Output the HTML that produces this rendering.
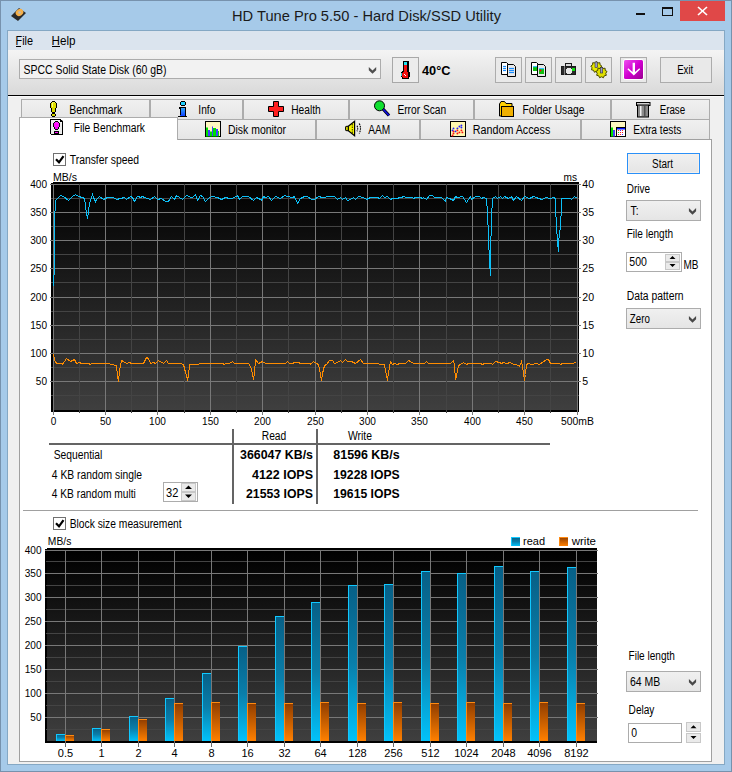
<!DOCTYPE html><html><head><meta charset="utf-8"><style>html,body{margin:0;padding:0;width:732px;height:772px;overflow:hidden;background:#a9cbea}svg{display:block}text{font-family:"Liberation Sans", sans-serif}</style></head><body>
<svg width="732" height="772" viewBox="0 0 732 772" shape-rendering="crispEdges">
<defs>
<linearGradient id="tb" x1="0" y1="0" x2="0" y2="1"><stop offset="0" stop-color="#f4f4f4"/><stop offset="1" stop-color="#d9d9d9"/></linearGradient>
<linearGradient id="tab" x1="0" y1="0" x2="0" y2="1"><stop offset="0" stop-color="#f0f0f0"/><stop offset="1" stop-color="#e5e5e5"/></linearGradient>
<linearGradient id="btn" x1="0" y1="0" x2="0" y2="1"><stop offset="0" stop-color="#f0f0f0"/><stop offset="1" stop-color="#e5e5e5"/></linearGradient>
<linearGradient id="ch" x1="0" y1="0" x2="0" y2="1"><stop offset="0" stop-color="#000000"/><stop offset="1" stop-color="#3f3f3f"/></linearGradient>
<linearGradient id="rb" x1="0" y1="0" x2="0" y2="1"><stop offset="0" stop-color="#075f86"/><stop offset="0.5" stop-color="#0a7eaa"/><stop offset="1" stop-color="#02c2fa"/></linearGradient>
<linearGradient id="wb" x1="0" y1="0" x2="0" y2="1"><stop offset="0" stop-color="#8e3c00"/><stop offset="1" stop-color="#ff8000"/></linearGradient>
</defs>
<rect x="0" y="0" width="732" height="772" fill="#7792ad"/>
<rect x="1" y="1" width="730" height="770" fill="#a6cae9"/>
<rect x="7" y="30" width="718" height="735" fill="#85a8c4"/>
<rect x="8" y="31" width="716" height="733" fill="#f0f0f0"/>
<text x="232" y="21" font-size="15" text-anchor="start" font-weight="normal" fill="#1a1a1a" textLength="269" lengthAdjust="spacingAndGlyphs">HD Tune Pro 5.50 - Hard Disk/SSD Utility</text>
<g shape-rendering="geometricPrecision"><path d="M11 16 L19 8 L26 13 L18 21 Z" fill="#2a2a2a"/><ellipse cx="19.5" cy="12.5" rx="4" ry="3.3" fill="#f5b04a" transform="rotate(-35 19.5 12.5)"/><circle cx="19.5" cy="12.5" r="1.2" fill="#bbb"/></g>
<rect x="636" y="13" width="9" height="2" fill="#111"/>
<rect x="662" y="7" width="11" height="9" fill="#111"/>
<rect x="663" y="8" width="9" height="7" fill="#a6cae9"/>
<rect x="663" y="8" width="9" height="1" fill="#111"/>
<rect x="680" y="1" width="45" height="20" fill="#e04848"/>
<g shape-rendering="geometricPrecision" stroke="#fff" stroke-width="1.6"><line x1="698" y1="7" x2="707" y2="15"/><line x1="707" y1="7" x2="698" y2="15"/></g>
<rect x="8" y="31" width="716" height="19" fill="#dbe4ee"/>
<text x="15.5" y="44.5" font-size="12" text-anchor="start" font-weight="normal" fill="#000" textLength="17.5" lengthAdjust="spacingAndGlyphs">File</text>
<rect x="16" y="46" width="5" height="1" fill="#000"/>
<text x="51.5" y="44.5" font-size="12" text-anchor="start" font-weight="normal" fill="#000" textLength="24" lengthAdjust="spacingAndGlyphs">Help</text>
<rect x="52" y="46" width="8" height="1" fill="#000"/>
<rect x="8" y="50" width="716" height="45" fill="url(#tb)"/>
<rect x="8" y="95" width="716" height="1" fill="#000"/>
<rect x="8" y="96" width="716" height="1" fill="#fafafa"/>
<rect x="19" y="59" width="362" height="20" fill="#acacac"/>
<rect x="20" y="60" width="360" height="18" fill="#f2f2f2"/>
<text x="23.5" y="74" font-size="12" text-anchor="start" font-weight="normal" fill="#000" textLength="143" lengthAdjust="spacingAndGlyphs">SPCC Solid State Disk (60 gB)</text>
<path d="M368.8 67 L372.5 70.6 L376.2 67 L376.2 70.2 L372.5 73.8 L368.8 70.2 Z" fill="#505050" shape-rendering="geometricPrecision"/>
<rect x="392" y="57" width="27" height="26" fill="#a8a8a8"/>
<rect x="393" y="58" width="25" height="24" fill="#ececec"/>
<rect x="403" y="61" width="6" height="11" fill="#000"/>
<rect x="404" y="62" width="3" height="3" fill="#20e0f0"/>
<rect x="404" y="65" width="3" height="7" fill="#f01010"/>
<rect x="407" y="62" width="2" height="10" fill="#000"/>
<rect x="402" y="71" width="7" height="7" fill="#000"/>
<rect x="401" y="72" width="9" height="5" fill="#000"/>
<rect x="402" y="72" width="6" height="5" fill="#f01010"/>
<rect x="403" y="77" width="5" height="1" fill="#f01010"/>
<rect x="401" y="73" width="1" height="3" fill="#20d0e0"/>
<rect x="404" y="74" width="1" height="1" fill="#fff"/>
<rect x="405" y="75" width="1" height="1" fill="#fff"/>
<rect x="402" y="78" width="7" height="1" fill="#000"/>
<rect x="404" y="71" width="3" height="2" fill="#f01010"/>
<rect x="402" y="72" width="1" height="1" fill="#000"/>
<rect x="408" y="72" width="1" height="1" fill="#000"/>
<text x="422" y="75" font-size="12" text-anchor="start" font-weight="bold" fill="#000" textLength="28.5" lengthAdjust="spacingAndGlyphs">40°C</text>
<rect x="495" y="57" width="27" height="26" fill="#acacac"/>
<rect x="496" y="58" width="25" height="24" fill="#e9e9e9"/>
<rect x="525" y="57" width="27" height="26" fill="#acacac"/>
<rect x="526" y="58" width="25" height="24" fill="#e9e9e9"/>
<rect x="555" y="57" width="27" height="26" fill="#acacac"/>
<rect x="556" y="58" width="25" height="24" fill="#e9e9e9"/>
<rect x="585" y="57" width="27" height="26" fill="#acacac"/>
<rect x="586" y="58" width="25" height="24" fill="#e9e9e9"/>
<rect x="620" y="57" width="27" height="26" fill="#acacac"/>
<rect x="621" y="58" width="25" height="24" fill="#e9e9e9"/>
<rect x="660" y="57" width="52" height="26" fill="#acacac"/>
<rect x="661" y="58" width="50" height="24" fill="#e9e9e9"/>
<text x="677.2" y="74" font-size="12" text-anchor="start" font-weight="normal" fill="#000" textLength="16" lengthAdjust="spacingAndGlyphs">Exit</text>
<g shape-rendering="geometricPrecision">
<path d="M501.5 62.5 h5 l1.5 1.5 v10.5 h-6.5 z" fill="#fff" stroke="#000" stroke-width="1"/>
<path d="M507.5 64.5 h6 l2 2 v10 h-8 z" fill="#e8e8e8" stroke="#000" stroke-width="1"/>
<path d="M531.5 62.5 h5 l1.5 1.5 v10.5 h-6.5 z" fill="#fff" stroke="#000" stroke-width="1"/>
<path d="M537.5 64.5 h6 l2 2 v10 h-8 z" fill="#e8e8e8" stroke="#000" stroke-width="1"/>
<g stroke="#1a8cff" stroke-width="1.2"><line x1="503" y1="66.5" x2="506" y2="66.5"/><line x1="503" y1="68.5" x2="506" y2="68.5"/><line x1="503" y1="70.5" x2="506" y2="70.5"/><line x1="509" y1="68.5" x2="514" y2="68.5"/><line x1="509" y1="70.5" x2="514" y2="70.5"/><line x1="509" y1="72.5" x2="514" y2="72.5"/></g>
<rect x="533" y="66" width="4" height="5" fill="#10c010"/><rect x="533" y="66" width="4" height="1.2" fill="#30c0ff"/><rect x="539" y="68" width="5" height="6" fill="#10c010"/><rect x="539" y="68" width="5" height="1.2" fill="#30c0ff"/><circle cx="540.5" cy="70.5" r="0.9" fill="#f00"/>
</g>
<rect x="565" y="63" width="7" height="3" fill="#1a1a1a"/>
<rect x="566" y="64" width="5" height="2" fill="#d8d8d8"/>
<rect x="561" y="66" width="15" height="9" fill="#1a1a1a"/>
<rect x="562" y="67" width="13" height="7" fill="#2a2a2a"/>
<rect x="564" y="66" width="1" height="9" fill="#808080"/>
<rect x="567" y="68" width="4" height="6" fill="#e8e8e8"/>
<rect x="566" y="69" width="6" height="4" fill="#e8e8e8"/>
<rect x="572" y="68" width="3" height="3" fill="#10e010"/>
<g shape-rendering="geometricPrecision">
<polygon points="596.30,61.40 597.77,62.96 599.90,62.71 600.03,64.85 601.82,66.03 600.53,67.75 601.15,69.80 599.06,70.30 598.21,72.26 596.30,71.30 594.38,72.26 593.53,70.29 591.45,69.80 592.06,67.74 590.79,66.02 592.58,64.85 592.70,62.71 594.83,62.96" fill="#e8e800" stroke="#4a4a00" stroke-width="1"/>
<polygon points="601.50,66.90 602.97,68.46 605.10,68.21 605.23,70.35 607.02,71.53 605.73,73.25 606.35,75.30 604.26,75.80 603.41,77.76 601.50,76.80 599.58,77.76 598.73,75.79 596.65,75.30 597.26,73.24 595.99,71.52 597.78,70.35 597.90,68.21 600.03,68.46" fill="#e0e000" stroke="#4a4a00" stroke-width="1"/>
<rect x="595" y="62" width="2.4" height="5.5" fill="#9a9ac8" stroke="#333" stroke-width="0.6"/><rect x="600.3" y="67.5" width="2.4" height="5.5" fill="#9a9ac8" stroke="#333" stroke-width="0.6"/>
<defs><linearGradient id="mg" x1="0" y1="0" x2="1" y2="1"><stop offset="0" stop-color="#f050f0"/><stop offset="0.5" stop-color="#d000d0"/><stop offset="1" stop-color="#9a0090"/></linearGradient></defs>
<rect x="623.5" y="59.5" width="20" height="20" rx="2" fill="none" stroke="#fff" stroke-width="1"/><rect x="624" y="60" width="19" height="19" rx="1.5" fill="url(#mg)"/><path d="M632.6 62.8 h2.4 v9.2 l4.3 -3.8 l0.9 1 l-6.4 6.4 l-6.4 -6.4 l0.9 -1 l4.3 3.8 z" fill="#fff"/>
</g>
<rect x="21" y="99" width="129" height="21" fill="#acacac"/>
<rect x="22" y="100" width="127" height="20" fill="url(#tab)"/>
<text x="69.3" y="113.7" font-size="12" text-anchor="start" font-weight="normal" fill="#000" textLength="53" lengthAdjust="spacingAndGlyphs">Benchmark</text>
<rect x="150" y="99" width="93" height="21" fill="#acacac"/>
<rect x="151" y="100" width="91" height="20" fill="url(#tab)"/>
<text x="198.3" y="113.7" font-size="12" text-anchor="start" font-weight="normal" fill="#000" textLength="17" lengthAdjust="spacingAndGlyphs">Info</text>
<rect x="243" y="99" width="106" height="21" fill="#acacac"/>
<rect x="244" y="100" width="104" height="20" fill="url(#tab)"/>
<text x="291.2" y="113.7" font-size="12" text-anchor="start" font-weight="normal" fill="#000" textLength="29.5" lengthAdjust="spacingAndGlyphs">Health</text>
<rect x="349" y="99" width="125" height="21" fill="#acacac"/>
<rect x="350" y="100" width="123" height="20" fill="url(#tab)"/>
<text x="397.4" y="113.7" font-size="12" text-anchor="start" font-weight="normal" fill="#000" textLength="48.8" lengthAdjust="spacingAndGlyphs">Error Scan</text>
<rect x="474" y="99" width="137" height="21" fill="#acacac"/>
<rect x="475" y="100" width="135" height="20" fill="url(#tab)"/>
<text x="522.5" y="113.7" font-size="12" text-anchor="start" font-weight="normal" fill="#000" textLength="62" lengthAdjust="spacingAndGlyphs">Folder Usage</text>
<rect x="611" y="99" width="99" height="21" fill="#acacac"/>
<rect x="612" y="100" width="97" height="20" fill="url(#tab)"/>
<text x="659.7" y="113.7" font-size="12" text-anchor="start" font-weight="normal" fill="#000" textLength="25.5" lengthAdjust="spacingAndGlyphs">Erase</text>
<rect x="177" y="119" width="139" height="21" fill="#acacac"/>
<rect x="178" y="120" width="137" height="20" fill="url(#tab)"/>
<text x="228" y="133.5" font-size="12" text-anchor="start" font-weight="normal" fill="#000" textLength="58" lengthAdjust="spacingAndGlyphs">Disk monitor</text>
<rect x="316" y="119" width="104" height="21" fill="#acacac"/>
<rect x="317" y="120" width="102" height="20" fill="url(#tab)"/>
<text x="368.3" y="133.5" font-size="12" text-anchor="start" font-weight="normal" fill="#000" textLength="22" lengthAdjust="spacingAndGlyphs">AAM</text>
<rect x="420" y="119" width="161" height="21" fill="#acacac"/>
<rect x="421" y="120" width="159" height="20" fill="url(#tab)"/>
<text x="472.8" y="133.5" font-size="12" text-anchor="start" font-weight="normal" fill="#000" textLength="77.5" lengthAdjust="spacingAndGlyphs">Random Access</text>
<rect x="581" y="119" width="129" height="21" fill="#acacac"/>
<rect x="582" y="120" width="127" height="20" fill="url(#tab)"/>
<text x="633.3" y="133.5" font-size="12" text-anchor="start" font-weight="normal" fill="#000" textLength="48" lengthAdjust="spacingAndGlyphs">Extra tests</text>
<rect x="19" y="139" width="693" height="623" fill="#a0a0a0"/>
<rect x="20" y="140" width="691" height="621" fill="#ffffff"/>
<rect x="19" y="117" width="159" height="23" fill="#acacac"/>
<rect x="20" y="118" width="157" height="22" fill="#ffffff"/>
<text x="73.7" y="132" font-size="12" text-anchor="start" font-weight="normal" fill="#000" textLength="71.3" lengthAdjust="spacingAndGlyphs">File Benchmark</text>
<g shape-rendering="geometricPrecision">
</g>
<rect x="52" y="101" width="3" height="1" fill="#000"/>
<rect x="51" y="102" width="5" height="1" fill="#000"/>
<rect x="50" y="103" width="7" height="5" fill="#000"/>
<rect x="51" y="108" width="5" height="4" fill="#000"/>
<rect x="52" y="112" width="3" height="1" fill="#000"/>
<rect x="52" y="102" width="3" height="1" fill="#f0f040"/>
<rect x="51" y="103" width="5" height="5" fill="#e0e000"/>
<rect x="52" y="108" width="3" height="4" fill="#d8d800"/>
<rect x="52" y="103" width="1" height="4" fill="#f8f880"/>
<rect x="52" y="113" width="3" height="1" fill="#000"/>
<rect x="51" y="114" width="5" height="2" fill="#000"/>
<rect x="52" y="116" width="3" height="1" fill="#000"/>
<rect x="52" y="114" width="3" height="2" fill="#d0d000"/>
<rect x="51" y="120" width="12" height="15" fill="#b0b0b0"/>
<rect x="50" y="119" width="11" height="15" fill="#000"/>
<rect x="60" y="120" width="2" height="1" fill="#000"/>
<rect x="61" y="121" width="1" height="1" fill="#000"/>
<rect x="62" y="121" width="1" height="13" fill="#000"/>
<rect x="51" y="134" width="12" height="1" fill="#000"/>
<rect x="51" y="120" width="9" height="14" fill="#ececec"/>
<rect x="60" y="121" width="1" height="13" fill="#ececec"/>
<rect x="61" y="122" width="1" height="12" fill="#ececec"/>
<rect x="60" y="121" width="1" height="1" fill="#000"/>
<rect x="61" y="122" width="1" height="1" fill="#fff"/>
<rect x="55" y="121" width="3" height="1" fill="#000"/>
<rect x="54" y="122" width="5" height="1" fill="#000"/>
<rect x="53" y="123" width="7" height="4" fill="#000"/>
<rect x="54" y="127" width="5" height="2" fill="#000"/>
<rect x="55" y="129" width="3" height="1" fill="#000"/>
<rect x="55" y="122" width="3" height="1" fill="#ff30ff"/>
<rect x="54" y="123" width="5" height="4" fill="#ff10ff"/>
<rect x="55" y="127" width="3" height="2" fill="#f000f0"/>
<rect x="54" y="131" width="5" height="3" fill="#000"/>
<rect x="55" y="132" width="3" height="1" fill="#ff10ff"/>
<g shape-rendering="geometricPrecision">
</g>
<rect x="181" y="101" width="4" height="1" fill="#000"/>
<rect x="180" y="102" width="6" height="3" fill="#000"/>
<rect x="181" y="105" width="4" height="1" fill="#000"/>
<rect x="181" y="102" width="4" height="3" fill="#20d0ff"/>
<rect x="179" y="107" width="7" height="1" fill="#000"/>
<rect x="179" y="108" width="2" height="1" fill="#000"/>
<rect x="180" y="109" width="1" height="7" fill="#000"/>
<rect x="185" y="108" width="1" height="8" fill="#000"/>
<rect x="178" y="116" width="9" height="1" fill="#000"/>
<defs><linearGradient id="ib" x1="0" y1="0" x2="0" y2="1"><stop offset="0" stop-color="#30a8ff"/><stop offset="1" stop-color="#1040ff"/></linearGradient></defs>
<rect x="181" y="108" width="4" height="8" fill="url(#ib)"/>
<rect x="180" y="115" width="1" height="1" fill="#1050ff"/>
<g shape-rendering="geometricPrecision">
<path d="M273.5 101.5 h5 v5 h5 v5 h-5 v5 h-5 v-5 h-5 v-5 h5 z" fill="#ff2020" stroke="#000" stroke-width="1"/>
<line x1="383" y1="109" x2="389" y2="115.5" stroke="#000" stroke-width="3.2"/><line x1="383" y1="109" x2="389" y2="115.5" stroke="#1010e0" stroke-width="1.8"/><circle cx="379.5" cy="105.8" r="5" fill="#10e030" stroke="#000" stroke-width="1"/>
<path d="M499.5 104 l1.5 -2.5 h3.5 l1.5 2 h6 v12.5 h-12.5 z" fill="#ffd000" stroke="#000" stroke-width="1"/><rect x="501.5" y="106.5" width="12" height="10" fill="#f0b000" stroke="#000" stroke-width="1"/>
<rect x="636.5" y="102.5" width="13.5" height="3" fill="#d0d0d0" stroke="#000" stroke-width="1"/><rect x="637.5" y="105" width="11" height="12" fill="#8a8a8a" stroke="#000" stroke-width="1"/><rect x="640" y="106" width="1.5" height="10" fill="#f0f0f0"/><rect x="644" y="106" width="1.5" height="10" fill="#505050"/>
<rect x="205.5" y="121.5" width="15" height="15" fill="#fff8c0" stroke="#000" stroke-width="1"/><path d="M206 127.5 h2 v3 h2 v1 h2 v-4.5 h1 v1 h3 v2 h1 v1 h2 v5.5 h-13 z" fill="#00e000"/><rect x="208" y="130" width="2" height="6" fill="#4040ff"/><rect x="212" y="126.5" width="1" height="9.5" fill="#4040ff"/><rect x="216" y="129" width="2" height="7" fill="#4040ff"/>
<rect x="345.6" y="126.2" width="3" height="4.6" rx="1.2" fill="#f0f000" stroke="#000" stroke-width="1.1"/><path d="M348.3 126.2 L354.6 121.2 L354.6 135.8 L348.3 130.8 Z" fill="#f4f400" stroke="#000" stroke-width="1.2"/><line x1="352.3" y1="124" x2="352.3" y2="133.5" stroke="#000" stroke-width="0.8" stroke-dasharray="1.5 1"/><path d="M357 125.8 q1.4 2.7 0 5.4 M359.2 123.6 q2.6 4.9 0 9.8" fill="none" stroke="#000" stroke-width="1.1" stroke-dasharray="1.6 0.8"/>
<rect x="450.5" y="121.5" width="15" height="15" fill="#fff8b0" stroke="#000" stroke-width="1"/>
<circle cx="453.5" cy="128.4" r="0.95" fill="#2020ff"/>
<circle cx="452.5" cy="130.4" r="0.95" fill="#2020ff"/>
<circle cx="455.5" cy="131.4" r="0.95" fill="#2020ff"/>
<circle cx="457.4" cy="128.4" r="0.95" fill="#2020ff"/>
<circle cx="459.4" cy="126.5" r="0.95" fill="#2020ff"/>
<circle cx="461.4" cy="125.4" r="0.95" fill="#2020ff"/>
<circle cx="461.4" cy="127.5" r="0.95" fill="#2020ff"/>
<circle cx="453.5" cy="131.4" r="0.95" fill="#ff1010"/>
<circle cx="453.5" cy="133.5" r="0.95" fill="#ff1010"/>
<circle cx="457.4" cy="130.4" r="0.95" fill="#ff1010"/>
<circle cx="457.4" cy="133.5" r="0.95" fill="#ff1010"/>
<circle cx="459.4" cy="132.4" r="0.95" fill="#ff1010"/>
<circle cx="461.4" cy="130.4" r="0.95" fill="#ff1010"/>
<circle cx="462.4" cy="132.4" r="0.95" fill="#ff1010"/>
<circle cx="452.5" cy="135.5" r="0.95" fill="#ff1010"/>
<rect x="610.5" y="121.5" width="15" height="15" fill="#fff8c0" stroke="#000" stroke-width="1"/><rect x="611" y="127.5" width="2" height="9" fill="#00e000"/><rect x="613" y="130" width="2" height="6.5" fill="#4040ff"/><rect x="616.5" y="127.5" width="9" height="9" fill="#fff" stroke="#000" stroke-width="1"/><rect x="617" y="128" width="8" height="1.5" fill="#0010ff"/>
<circle cx="618.5" cy="130.5" r="0.6" fill="#f00"/>
<circle cx="620.5" cy="130.5" r="0.6" fill="#20f"/>
<circle cx="622.5" cy="130.5" r="0.6" fill="#f00"/>
<circle cx="618.5" cy="132.5" r="0.6" fill="#0c0"/>
<circle cx="620.5" cy="132.5" r="0.6" fill="#f00"/>
<circle cx="622.5" cy="132.5" r="0.6" fill="#f00"/>
<circle cx="618.5" cy="134.5" r="0.6" fill="#f00"/>
<circle cx="620.5" cy="134.5" r="0.6" fill="#f00"/>
<circle cx="622.5" cy="134.5" r="0.6" fill="#20f"/>
</g>
<rect x="53" y="153" width="13" height="13" fill="#707070"/>
<rect x="54" y="154" width="11" height="11" fill="#ffffff"/>
<path d="M56 159.3 l3 3 l4.5 -6.2" fill="none" stroke="#000" stroke-width="2.2" shape-rendering="geometricPrecision"/>
<text x="69.8" y="163.7" font-size="12" text-anchor="start" font-weight="normal" fill="#000" textLength="69.2" lengthAdjust="spacingAndGlyphs">Transfer speed</text>
<rect x="51" y="182" width="528" height="230" fill="#000"/>
<rect x="53" y="184" width="524" height="226" fill="url(#ch)"/>
<rect x="51" y="410" width="528" height="2" fill="#000"/>
<rect x="51" y="182" width="2" height="1" fill="#ffffff"/>
<rect x="50" y="184" width="531" height="1" fill="#787878"/><rect x="51" y="198" width="528" height="1" fill="#444444"/><rect x="50" y="212" width="531" height="1" fill="#787878"/><rect x="51" y="226" width="528" height="1" fill="#444444"/><rect x="50" y="240" width="531" height="1" fill="#787878"/><rect x="51" y="254" width="528" height="1" fill="#444444"/><rect x="50" y="268" width="531" height="1" fill="#787878"/><rect x="51" y="282" width="528" height="1" fill="#444444"/><rect x="50" y="297" width="531" height="1" fill="#787878"/><rect x="51" y="311" width="528" height="1" fill="#444444"/><rect x="50" y="325" width="531" height="1" fill="#787878"/><rect x="51" y="339" width="528" height="1" fill="#444444"/><rect x="50" y="353" width="531" height="1" fill="#787878"/><rect x="51" y="367" width="528" height="1" fill="#444444"/><rect x="50" y="381" width="531" height="1" fill="#787878"/><rect x="51" y="395" width="528" height="1" fill="#444444"/><rect x="53" y="184" width="1" height="231" fill="#787878"/><rect x="79" y="184" width="1" height="229" fill="#444444"/><rect x="105" y="184" width="1" height="231" fill="#787878"/><rect x="131" y="184" width="1" height="229" fill="#444444"/><rect x="157" y="184" width="1" height="231" fill="#787878"/><rect x="184" y="184" width="1" height="229" fill="#444444"/><rect x="210" y="184" width="1" height="231" fill="#787878"/><rect x="236" y="184" width="1" height="229" fill="#444444"/><rect x="262" y="184" width="1" height="231" fill="#787878"/><rect x="288" y="184" width="1" height="229" fill="#444444"/><rect x="315" y="184" width="1" height="231" fill="#787878"/><rect x="341" y="184" width="1" height="229" fill="#444444"/><rect x="367" y="184" width="1" height="231" fill="#787878"/><rect x="393" y="184" width="1" height="229" fill="#444444"/><rect x="419" y="184" width="1" height="231" fill="#787878"/><rect x="446" y="184" width="1" height="229" fill="#444444"/><rect x="472" y="184" width="1" height="231" fill="#787878"/><rect x="498" y="184" width="1" height="229" fill="#444444"/><rect x="524" y="184" width="1" height="231" fill="#787878"/><rect x="550" y="184" width="1" height="229" fill="#444444"/><rect x="577" y="184" width="1" height="231" fill="#787878"/>
<polyline points="53.5,286.5 54.5,264.5 54.5,222.5 55.5,200.5 60.5,195.5 63.5,196.5 68.5,200.5 72.5,196.5 75.5,194.5 78.5,196.5 82.5,197.5 84.5,198.5 86.5,213.5 87.5,218.5 88.5,211.5 89.5,203.5 92.5,194.5 93.5,197.5 95.5,201.5 96.5,199.5 99.5,196.5 103.5,199.5 107.5,197.5 113.5,197.5 116.5,199.5 120.5,198.5 124.5,197.5 126.5,199.5 130.5,196.5 132.5,197.5 134.5,201.5 137.5,196.5 138.5,196.5 140.5,197.5 142.5,196.5 144.5,197.5 147.5,198.5 150.5,199.5 154.5,196.5 157.5,199.5 161.5,198.5 165.5,201.5 168.5,201.5 171.5,196.5 174.5,199.5 176.5,195.5 179.5,197.5 182.5,199.5 186.5,195.5 187.5,195.5 190.5,197.5 192.5,197.5 195.5,194.5 197.5,200.5 200.5,195.5 202.5,196.5 205.5,201.5 209.5,197.5 212.5,196.5 217.5,197.5 221.5,199.5 225.5,197.5 229.5,198.5 232.5,198.5 237.5,195.5 239.5,199.5 242.5,196.5 248.5,196.5 253.5,200.5 256.5,197.5 260.5,199.5 261.5,200.5 263.5,196.5 265.5,197.5 268.5,196.5 271.5,200.5 275.5,196.5 280.5,198.5 284.5,195.5 287.5,196.5 292.5,197.5 294.5,196.5 297.5,203.5 300.5,198.5 304.5,196.5 307.5,196.5 311.5,199.5 314.5,199.5 318.5,196.5 322.5,197.5 330.5,196.5 331.5,196.5 334.5,196.5 337.5,199.5 340.5,197.5 342.5,199.5 345.5,197.5 347.5,200.5 350.5,199.5 353.5,197.5 355.5,199.5 358.5,196.5 363.5,197.5 366.5,199.5 370.5,197.5 377.5,197.5 379.5,198.5 382.5,195.5 384.5,197.5 387.5,196.5 390.5,199.5 392.5,198.5 396.5,198.5 400.5,197.5 404.5,196.5 405.5,197.5 412.5,197.5 413.5,198.5 415.5,197.5 420.5,197.5 422.5,198.5 423.5,197.5 426.5,199.5 429.5,195.5 432.5,195.5 434.5,197.5 441.5,197.5 445.5,201.5 446.5,197.5 449.5,198.5 453.5,200.5 455.5,196.5 457.5,197.5 462.5,196.5 466.5,202.5 470.5,196.5 471.5,199.5 475.5,196.5 479.5,196.5 481.5,198.5 483.5,197.5 486.5,198.5 487.5,212.5 488.5,237.5 489.5,262.5 490.5,275.5 490.5,255.5 491.5,218.5 492.5,198.5 495.5,196.5 497.5,198.5 500.5,196.5 502.5,198.5 504.5,196.5 508.5,198.5 511.5,196.5 513.5,200.5 516.5,196.5 521.5,200.5 524.5,196.5 529.5,198.5 533.5,196.5 536.5,197.5 538.5,198.5 542.5,199.5 545.5,197.5 550.5,198.5 553.5,197.5 555.5,198.5 555.5,207.5 556.5,225.5 557.5,242.5 558.5,251.5 558.5,242.5 560.5,225.5 561.5,207.5 561.5,198.5 570.5,198.5 571.5,199.5 574.5,196.5 577.5,198.5" fill="none" stroke="#0cc0f8" stroke-width="1" shape-rendering="crispEdges"/>
<polyline points="53.5,354.5 54.5,359.5 55.5,362.5 57.5,363.5 62.5,363.5 62.5,364.5 66.5,358.5 70.5,361.5 74.5,359.5 76.5,363.5 79.5,362.5 81.5,363.5 88.5,363.5 90.5,364.5 91.5,363.5 109.5,363.5 110.5,364.5 116.5,365.5 117.5,376.5 118.5,381.5 119.5,370.5 121.5,360.5 123.5,361.5 126.5,363.5 129.5,362.5 131.5,363.5 143.5,363.5 146.5,357.5 148.5,358.5 150.5,363.5 153.5,362.5 155.5,363.5 158.5,360.5 163.5,363.5 166.5,360.5 168.5,363.5 180.5,363.5 183.5,364.5 185.5,372.5 187.5,379.5 188.5,375.5 189.5,364.5 198.5,364.5 199.5,363.5 222.5,363.5 224.5,364.5 225.5,363.5 229.5,363.5 232.5,361.5 234.5,363.5 248.5,363.5 249.5,364.5 251.5,369.5 253.5,379.5 254.5,373.5 255.5,359.5 258.5,363.5 262.5,361.5 265.5,363.5 285.5,363.5 287.5,361.5 289.5,363.5 292.5,363.5 294.5,362.5 298.5,362.5 300.5,363.5 310.5,363.5 310.5,364.5 313.5,361.5 316.5,363.5 318.5,364.5 319.5,369.5 321.5,380.5 322.5,373.5 324.5,365.5 326.5,364.5 329.5,360.5 332.5,360.5 334.5,363.5 337.5,362.5 340.5,360.5 342.5,362.5 345.5,359.5 347.5,361.5 351.5,361.5 355.5,363.5 360.5,359.5 363.5,363.5 377.5,363.5 380.5,364.5 384.5,364.5 385.5,370.5 387.5,380.5 388.5,372.5 390.5,361.5 392.5,364.5 394.5,363.5 397.5,364.5 399.5,363.5 405.5,363.5 408.5,360.5 410.5,361.5 413.5,363.5 424.5,363.5 426.5,361.5 428.5,363.5 450.5,363.5 453.5,360.5 454.5,365.5 455.5,379.5 456.5,375.5 458.5,365.5 460.5,364.5 463.5,362.5 466.5,364.5 468.5,363.5 480.5,363.5 482.5,364.5 484.5,363.5 491.5,363.5 492.5,364.5 495.5,361.5 499.5,362.5 501.5,363.5 503.5,362.5 506.5,363.5 510.5,362.5 513.5,364.5 516.5,364.5 519.5,366.5 521.5,361.5 522.5,366.5 524.5,380.5 525.5,374.5 526.5,364.5 528.5,363.5 531.5,364.5 536.5,363.5 539.5,364.5 546.5,359.5 548.5,359.5 550.5,363.5 559.5,363.5 560.5,364.5 562.5,363.5 573.5,363.5 576.5,361.5" fill="none" stroke="#ff8c00" stroke-width="1" shape-rendering="crispEdges"/>
<text x="53" y="181" font-size="11" text-anchor="start" font-weight="normal" fill="#000" textLength="24" lengthAdjust="spacingAndGlyphs">MB/s</text>
<text x="577" y="181" font-size="11" text-anchor="end" font-weight="normal" fill="#000" textLength="13.5" lengthAdjust="spacingAndGlyphs">ms</text>
<text x="47" y="188" font-size="11" text-anchor="end" font-weight="normal" fill="#000" textLength="16.8" lengthAdjust="spacingAndGlyphs">400</text>
<text x="582.3" y="188" font-size="11" text-anchor="start" font-weight="normal" fill="#000" textLength="11.8" lengthAdjust="spacingAndGlyphs">40</text>
<text x="47" y="216" font-size="11" text-anchor="end" font-weight="normal" fill="#000" textLength="16.8" lengthAdjust="spacingAndGlyphs">350</text>
<text x="582.3" y="216" font-size="11" text-anchor="start" font-weight="normal" fill="#000" textLength="11.8" lengthAdjust="spacingAndGlyphs">35</text>
<text x="47" y="244" font-size="11" text-anchor="end" font-weight="normal" fill="#000" textLength="16.8" lengthAdjust="spacingAndGlyphs">300</text>
<text x="582.3" y="244" font-size="11" text-anchor="start" font-weight="normal" fill="#000" textLength="11.8" lengthAdjust="spacingAndGlyphs">30</text>
<text x="47" y="272" font-size="11" text-anchor="end" font-weight="normal" fill="#000" textLength="16.8" lengthAdjust="spacingAndGlyphs">250</text>
<text x="582.3" y="272" font-size="11" text-anchor="start" font-weight="normal" fill="#000" textLength="11.8" lengthAdjust="spacingAndGlyphs">25</text>
<text x="47" y="301" font-size="11" text-anchor="end" font-weight="normal" fill="#000" textLength="16.8" lengthAdjust="spacingAndGlyphs">200</text>
<text x="582.3" y="301" font-size="11" text-anchor="start" font-weight="normal" fill="#000" textLength="11.8" lengthAdjust="spacingAndGlyphs">20</text>
<text x="47" y="329" font-size="11" text-anchor="end" font-weight="normal" fill="#000" textLength="16.8" lengthAdjust="spacingAndGlyphs">150</text>
<text x="582.3" y="329" font-size="11" text-anchor="start" font-weight="normal" fill="#000" textLength="11.8" lengthAdjust="spacingAndGlyphs">15</text>
<text x="47" y="357" font-size="11" text-anchor="end" font-weight="normal" fill="#000" textLength="16.8" lengthAdjust="spacingAndGlyphs">100</text>
<text x="582.3" y="357" font-size="11" text-anchor="start" font-weight="normal" fill="#000" textLength="11.8" lengthAdjust="spacingAndGlyphs">10</text>
<text x="47" y="385" font-size="11" text-anchor="end" font-weight="normal" fill="#000" textLength="11.2" lengthAdjust="spacingAndGlyphs">50</text>
<text x="582.3" y="385" font-size="11" text-anchor="start" font-weight="normal" fill="#000" textLength="5.9" lengthAdjust="spacingAndGlyphs">5</text>
<text x="53.5" y="425" font-size="11" text-anchor="middle" font-weight="normal" fill="#000" textLength="5.6" lengthAdjust="spacingAndGlyphs">0</text>
<text x="105.5" y="425" font-size="11" text-anchor="middle" font-weight="normal" fill="#000" textLength="11.2" lengthAdjust="spacingAndGlyphs">50</text>
<text x="157.5" y="425" font-size="11" text-anchor="middle" font-weight="normal" fill="#000" textLength="16.8" lengthAdjust="spacingAndGlyphs">100</text>
<text x="210.5" y="425" font-size="11" text-anchor="middle" font-weight="normal" fill="#000" textLength="16.8" lengthAdjust="spacingAndGlyphs">150</text>
<text x="262.5" y="425" font-size="11" text-anchor="middle" font-weight="normal" fill="#000" textLength="16.8" lengthAdjust="spacingAndGlyphs">200</text>
<text x="315.5" y="425" font-size="11" text-anchor="middle" font-weight="normal" fill="#000" textLength="16.8" lengthAdjust="spacingAndGlyphs">250</text>
<text x="367.5" y="425" font-size="11" text-anchor="middle" font-weight="normal" fill="#000" textLength="16.8" lengthAdjust="spacingAndGlyphs">300</text>
<text x="419.5" y="425" font-size="11" text-anchor="middle" font-weight="normal" fill="#000" textLength="16.8" lengthAdjust="spacingAndGlyphs">350</text>
<text x="472.5" y="425" font-size="11" text-anchor="middle" font-weight="normal" fill="#000" textLength="16.8" lengthAdjust="spacingAndGlyphs">400</text>
<text x="524.5" y="425" font-size="11" text-anchor="middle" font-weight="normal" fill="#000" textLength="16.8" lengthAdjust="spacingAndGlyphs">450</text>
<text x="577.5" y="425" font-size="11" text-anchor="middle" font-weight="normal" fill="#000" textLength="33" lengthAdjust="spacingAndGlyphs">500mB</text>
<text x="274" y="439.8" font-size="12" text-anchor="middle" font-weight="normal" fill="#000" textLength="24.5" lengthAdjust="spacingAndGlyphs">Read</text>
<text x="360" y="439.8" font-size="12" text-anchor="middle" font-weight="normal" fill="#000" textLength="24" lengthAdjust="spacingAndGlyphs">Write</text>
<rect x="232" y="429" width="2" height="75" fill="#646464"/>
<rect x="316" y="429" width="2" height="75" fill="#646464"/>
<rect x="49" y="443" width="501" height="2" fill="#646464"/>
<text x="53.7" y="458.6" font-size="12" text-anchor="start" font-weight="normal" fill="#000" textLength="48.7" lengthAdjust="spacingAndGlyphs">Sequential</text>
<text x="51.8" y="479" font-size="12" text-anchor="start" font-weight="normal" fill="#000" textLength="90.2" lengthAdjust="spacingAndGlyphs">4 KB random single</text>
<text x="51.8" y="498" font-size="12" text-anchor="start" font-weight="normal" fill="#000" textLength="84" lengthAdjust="spacingAndGlyphs">4 KB random multi</text>
<text x="313" y="458.7" font-size="12" text-anchor="end" font-weight="bold" fill="#000" textLength="73" lengthAdjust="spacingAndGlyphs">366047 KB/s</text>
<text x="313" y="478.7" font-size="12" text-anchor="end" font-weight="bold" fill="#000" textLength="61" lengthAdjust="spacingAndGlyphs">4122 IOPS</text>
<text x="313" y="498" font-size="12" text-anchor="end" font-weight="bold" fill="#000" textLength="67" lengthAdjust="spacingAndGlyphs">21553 IOPS</text>
<text x="333.3" y="458.7" font-size="12" text-anchor="start" font-weight="bold" fill="#000" textLength="66.4" lengthAdjust="spacingAndGlyphs">81596 KB/s</text>
<text x="333.3" y="478.7" font-size="12" text-anchor="start" font-weight="bold" fill="#000" textLength="66.4" lengthAdjust="spacingAndGlyphs">19228 IOPS</text>
<text x="333.3" y="498" font-size="12" text-anchor="start" font-weight="bold" fill="#000" textLength="66.4" lengthAdjust="spacingAndGlyphs">19615 IOPS</text>
<rect x="163" y="482" width="35" height="20" fill="#acacac"/>
<rect x="164" y="483" width="33" height="18" fill="#ffffff"/>
<text x="166" y="496.5" font-size="12" text-anchor="start" font-weight="normal" fill="#000" textLength="12.3" lengthAdjust="spacingAndGlyphs">32</text>
<rect x="181" y="483" width="15" height="9" fill="#c8c8c8"/>
<rect x="182" y="484" width="13" height="7" fill="#eaeaea"/>
<rect x="181" y="492" width="15" height="9" fill="#c8c8c8"/>
<rect x="182" y="493" width="13" height="7" fill="#eaeaea"/>
<path d="M185 489 h7 l-3.5 -3.5 z M185 494.5 h7 l-3.5 3.5 z" fill="#000" shape-rendering="geometricPrecision"/>
<rect x="23" y="510" width="675" height="1" fill="#a0a0a0"/>
<rect x="53" y="517" width="13" height="13" fill="#707070"/>
<rect x="54" y="518" width="11" height="11" fill="#ffffff"/>
<path d="M56 523.3 l3 3 l4.5 -6.2" fill="none" stroke="#000" stroke-width="2.2" shape-rendering="geometricPrecision"/>
<text x="69.7" y="527.8" font-size="12" text-anchor="start" font-weight="normal" fill="#000" textLength="112" lengthAdjust="spacingAndGlyphs">Block size measurement</text>
<rect x="45" y="548" width="552" height="195" fill="#000"/>
<rect x="47" y="550" width="550" height="191" fill="url(#ch)"/>
<rect x="45" y="548" width="2" height="1" fill="#ffffff"/>
<rect x="45" y="550" width="553" height="1" fill="#787878"/><rect x="46" y="561" width="551" height="1" fill="#444444"/><rect x="45" y="573" width="553" height="1" fill="#787878"/><rect x="46" y="585" width="551" height="1" fill="#444444"/><rect x="45" y="597" width="553" height="1" fill="#787878"/><rect x="46" y="609" width="551" height="1" fill="#444444"/><rect x="45" y="621" width="553" height="1" fill="#787878"/><rect x="46" y="633" width="551" height="1" fill="#444444"/><rect x="45" y="645" width="553" height="1" fill="#787878"/><rect x="46" y="657" width="551" height="1" fill="#444444"/><rect x="45" y="669" width="553" height="1" fill="#787878"/><rect x="46" y="681" width="551" height="1" fill="#444444"/><rect x="45" y="693" width="553" height="1" fill="#787878"/><rect x="46" y="705" width="551" height="1" fill="#444444"/><rect x="45" y="717" width="553" height="1" fill="#787878"/><rect x="46" y="729" width="551" height="1" fill="#444444"/><rect x="65" y="550" width="1" height="191" fill="#787878"/><rect x="101" y="550" width="1" height="191" fill="#787878"/><rect x="138" y="550" width="1" height="191" fill="#787878"/><rect x="174" y="550" width="1" height="191" fill="#787878"/><rect x="211" y="550" width="1" height="191" fill="#787878"/><rect x="247" y="550" width="1" height="191" fill="#787878"/><rect x="284" y="550" width="1" height="191" fill="#787878"/><rect x="320" y="550" width="1" height="191" fill="#787878"/><rect x="357" y="550" width="1" height="191" fill="#787878"/><rect x="393" y="550" width="1" height="191" fill="#787878"/><rect x="430" y="550" width="1" height="191" fill="#787878"/><rect x="466" y="550" width="1" height="191" fill="#787878"/><rect x="503" y="550" width="1" height="191" fill="#787878"/><rect x="539" y="550" width="1" height="191" fill="#787878"/><rect x="576" y="550" width="1" height="191" fill="#787878"/>
<rect x="56" y="734" width="9" height="7" fill="url(#rb)"/>
<rect x="56" y="734" width="9" height="1" fill="#10c8ff"/>
<rect x="56" y="734" width="1" height="7" fill="#10c8ff"/>
<rect x="65" y="735" width="9" height="6" fill="url(#wb)"/>
<rect x="65" y="735" width="9" height="1" fill="#ff8a10"/>
<rect x="65" y="735" width="1" height="6" fill="#ff8a10"/>
<rect x="92" y="728" width="9" height="13" fill="url(#rb)"/>
<rect x="92" y="728" width="9" height="1" fill="#10c8ff"/>
<rect x="92" y="728" width="1" height="13" fill="#10c8ff"/>
<rect x="101" y="729" width="9" height="12" fill="url(#wb)"/>
<rect x="101" y="729" width="9" height="1" fill="#ff8a10"/>
<rect x="101" y="729" width="1" height="12" fill="#ff8a10"/>
<rect x="129" y="716" width="9" height="25" fill="url(#rb)"/>
<rect x="129" y="716" width="9" height="1" fill="#10c8ff"/>
<rect x="129" y="716" width="1" height="25" fill="#10c8ff"/>
<rect x="138" y="719" width="9" height="22" fill="url(#wb)"/>
<rect x="138" y="719" width="9" height="1" fill="#ff8a10"/>
<rect x="138" y="719" width="1" height="22" fill="#ff8a10"/>
<rect x="165" y="698" width="9" height="43" fill="url(#rb)"/>
<rect x="165" y="698" width="9" height="1" fill="#10c8ff"/>
<rect x="165" y="698" width="1" height="43" fill="#10c8ff"/>
<rect x="174" y="703" width="9" height="38" fill="url(#wb)"/>
<rect x="174" y="703" width="9" height="1" fill="#ff8a10"/>
<rect x="174" y="703" width="1" height="38" fill="#ff8a10"/>
<rect x="202" y="673" width="9" height="68" fill="url(#rb)"/>
<rect x="202" y="673" width="9" height="1" fill="#10c8ff"/>
<rect x="202" y="673" width="1" height="68" fill="#10c8ff"/>
<rect x="211" y="702" width="9" height="39" fill="url(#wb)"/>
<rect x="211" y="702" width="9" height="1" fill="#ff8a10"/>
<rect x="211" y="702" width="1" height="39" fill="#ff8a10"/>
<rect x="238" y="646" width="9" height="95" fill="url(#rb)"/>
<rect x="238" y="646" width="9" height="1" fill="#10c8ff"/>
<rect x="238" y="646" width="1" height="95" fill="#10c8ff"/>
<rect x="247" y="703" width="9" height="38" fill="url(#wb)"/>
<rect x="247" y="703" width="9" height="1" fill="#ff8a10"/>
<rect x="247" y="703" width="1" height="38" fill="#ff8a10"/>
<rect x="275" y="616" width="9" height="125" fill="url(#rb)"/>
<rect x="275" y="616" width="9" height="1" fill="#10c8ff"/>
<rect x="275" y="616" width="1" height="125" fill="#10c8ff"/>
<rect x="284" y="703" width="9" height="38" fill="url(#wb)"/>
<rect x="284" y="703" width="9" height="1" fill="#ff8a10"/>
<rect x="284" y="703" width="1" height="38" fill="#ff8a10"/>
<rect x="311" y="602" width="9" height="139" fill="url(#rb)"/>
<rect x="311" y="602" width="9" height="1" fill="#10c8ff"/>
<rect x="311" y="602" width="1" height="139" fill="#10c8ff"/>
<rect x="320" y="702" width="9" height="39" fill="url(#wb)"/>
<rect x="320" y="702" width="9" height="1" fill="#ff8a10"/>
<rect x="320" y="702" width="1" height="39" fill="#ff8a10"/>
<rect x="348" y="585" width="9" height="156" fill="url(#rb)"/>
<rect x="348" y="585" width="9" height="1" fill="#10c8ff"/>
<rect x="348" y="585" width="1" height="156" fill="#10c8ff"/>
<rect x="357" y="703" width="9" height="38" fill="url(#wb)"/>
<rect x="357" y="703" width="9" height="1" fill="#ff8a10"/>
<rect x="357" y="703" width="1" height="38" fill="#ff8a10"/>
<rect x="384" y="584" width="9" height="157" fill="url(#rb)"/>
<rect x="384" y="584" width="9" height="1" fill="#10c8ff"/>
<rect x="384" y="584" width="1" height="157" fill="#10c8ff"/>
<rect x="393" y="702" width="9" height="39" fill="url(#wb)"/>
<rect x="393" y="702" width="9" height="1" fill="#ff8a10"/>
<rect x="393" y="702" width="1" height="39" fill="#ff8a10"/>
<rect x="421" y="571" width="9" height="170" fill="url(#rb)"/>
<rect x="421" y="571" width="9" height="1" fill="#10c8ff"/>
<rect x="421" y="571" width="1" height="170" fill="#10c8ff"/>
<rect x="430" y="703" width="9" height="38" fill="url(#wb)"/>
<rect x="430" y="703" width="9" height="1" fill="#ff8a10"/>
<rect x="430" y="703" width="1" height="38" fill="#ff8a10"/>
<rect x="457" y="573" width="9" height="168" fill="url(#rb)"/>
<rect x="457" y="573" width="9" height="1" fill="#10c8ff"/>
<rect x="457" y="573" width="1" height="168" fill="#10c8ff"/>
<rect x="466" y="702" width="9" height="39" fill="url(#wb)"/>
<rect x="466" y="702" width="9" height="1" fill="#ff8a10"/>
<rect x="466" y="702" width="1" height="39" fill="#ff8a10"/>
<rect x="494" y="566" width="9" height="175" fill="url(#rb)"/>
<rect x="494" y="566" width="9" height="1" fill="#10c8ff"/>
<rect x="494" y="566" width="1" height="175" fill="#10c8ff"/>
<rect x="503" y="703" width="9" height="38" fill="url(#wb)"/>
<rect x="503" y="703" width="9" height="1" fill="#ff8a10"/>
<rect x="503" y="703" width="1" height="38" fill="#ff8a10"/>
<rect x="530" y="571" width="9" height="170" fill="url(#rb)"/>
<rect x="530" y="571" width="9" height="1" fill="#10c8ff"/>
<rect x="530" y="571" width="1" height="170" fill="#10c8ff"/>
<rect x="539" y="702" width="9" height="39" fill="url(#wb)"/>
<rect x="539" y="702" width="9" height="1" fill="#ff8a10"/>
<rect x="539" y="702" width="1" height="39" fill="#ff8a10"/>
<rect x="567" y="567" width="9" height="174" fill="url(#rb)"/>
<rect x="567" y="567" width="9" height="1" fill="#10c8ff"/>
<rect x="567" y="567" width="1" height="174" fill="#10c8ff"/>
<rect x="576" y="703" width="9" height="38" fill="url(#wb)"/>
<rect x="576" y="703" width="9" height="1" fill="#ff8a10"/>
<rect x="576" y="703" width="1" height="38" fill="#ff8a10"/>
<rect x="45" y="741" width="552" height="2" fill="#000"/>
<rect x="65" y="741" width="1" height="6" fill="#6a6a6a"/>
<rect x="101" y="741" width="1" height="6" fill="#6a6a6a"/>
<rect x="138" y="741" width="1" height="6" fill="#6a6a6a"/>
<rect x="174" y="741" width="1" height="6" fill="#6a6a6a"/>
<rect x="211" y="741" width="1" height="6" fill="#6a6a6a"/>
<rect x="247" y="741" width="1" height="6" fill="#6a6a6a"/>
<rect x="284" y="741" width="1" height="6" fill="#6a6a6a"/>
<rect x="320" y="741" width="1" height="6" fill="#6a6a6a"/>
<rect x="357" y="741" width="1" height="6" fill="#6a6a6a"/>
<rect x="393" y="741" width="1" height="6" fill="#6a6a6a"/>
<rect x="430" y="741" width="1" height="6" fill="#6a6a6a"/>
<rect x="466" y="741" width="1" height="6" fill="#6a6a6a"/>
<rect x="503" y="741" width="1" height="6" fill="#6a6a6a"/>
<rect x="539" y="741" width="1" height="6" fill="#6a6a6a"/>
<rect x="576" y="741" width="1" height="6" fill="#6a6a6a"/>
<text x="47.8" y="545" font-size="11" text-anchor="start" font-weight="normal" fill="#000" textLength="23.5" lengthAdjust="spacingAndGlyphs">MB/s</text>
<text x="41.5" y="554" font-size="11" text-anchor="end" font-weight="normal" fill="#000" textLength="16.8" lengthAdjust="spacingAndGlyphs">400</text>
<text x="41.5" y="577" font-size="11" text-anchor="end" font-weight="normal" fill="#000" textLength="16.8" lengthAdjust="spacingAndGlyphs">350</text>
<text x="41.5" y="601" font-size="11" text-anchor="end" font-weight="normal" fill="#000" textLength="16.8" lengthAdjust="spacingAndGlyphs">300</text>
<text x="41.5" y="625" font-size="11" text-anchor="end" font-weight="normal" fill="#000" textLength="16.8" lengthAdjust="spacingAndGlyphs">250</text>
<text x="41.5" y="649" font-size="11" text-anchor="end" font-weight="normal" fill="#000" textLength="16.8" lengthAdjust="spacingAndGlyphs">200</text>
<text x="41.5" y="673" font-size="11" text-anchor="end" font-weight="normal" fill="#000" textLength="16.8" lengthAdjust="spacingAndGlyphs">150</text>
<text x="41.5" y="697" font-size="11" text-anchor="end" font-weight="normal" fill="#000" textLength="16.8" lengthAdjust="spacingAndGlyphs">100</text>
<text x="41.5" y="721" font-size="11" text-anchor="end" font-weight="normal" fill="#000" textLength="11.2" lengthAdjust="spacingAndGlyphs">50</text>
<text x="65.5" y="756.5" font-size="11" text-anchor="middle" font-weight="normal" fill="#000">0.5</text>
<text x="101.5" y="756.5" font-size="11" text-anchor="middle" font-weight="normal" fill="#000">1</text>
<text x="138.5" y="756.5" font-size="11" text-anchor="middle" font-weight="normal" fill="#000">2</text>
<text x="174.5" y="756.5" font-size="11" text-anchor="middle" font-weight="normal" fill="#000">4</text>
<text x="211.5" y="756.5" font-size="11" text-anchor="middle" font-weight="normal" fill="#000">8</text>
<text x="247.5" y="756.5" font-size="11" text-anchor="middle" font-weight="normal" fill="#000">16</text>
<text x="284.5" y="756.5" font-size="11" text-anchor="middle" font-weight="normal" fill="#000">32</text>
<text x="320.5" y="756.5" font-size="11" text-anchor="middle" font-weight="normal" fill="#000">64</text>
<text x="357.5" y="756.5" font-size="11" text-anchor="middle" font-weight="normal" fill="#000">128</text>
<text x="393.5" y="756.5" font-size="11" text-anchor="middle" font-weight="normal" fill="#000">256</text>
<text x="430.5" y="756.5" font-size="11" text-anchor="middle" font-weight="normal" fill="#000">512</text>
<text x="466.5" y="756.5" font-size="11" text-anchor="middle" font-weight="normal" fill="#000">1024</text>
<text x="503.5" y="756.5" font-size="11" text-anchor="middle" font-weight="normal" fill="#000">2048</text>
<text x="539.5" y="756.5" font-size="11" text-anchor="middle" font-weight="normal" fill="#000">4096</text>
<text x="576.5" y="756.5" font-size="11" text-anchor="middle" font-weight="normal" fill="#000">8192</text>
<rect x="511" y="537" width="9" height="9" fill="url(#rb)"/><rect x="511" y="537" width="9" height="1" fill="#10c8ff"/><rect x="511" y="537" width="1" height="9" fill="#10c8ff"/>
<text x="523" y="545" font-size="11" text-anchor="start" font-weight="normal" fill="#000" textLength="22" lengthAdjust="spacingAndGlyphs">read</text>
<rect x="559" y="537" width="9" height="9" fill="url(#wb)"/><rect x="559" y="537" width="9" height="1" fill="#ff8a10"/><rect x="559" y="537" width="1" height="9" fill="#ff8a10"/>
<text x="571.7" y="545" font-size="11" text-anchor="start" font-weight="normal" fill="#000" textLength="24.3" lengthAdjust="spacingAndGlyphs">write</text>
<rect x="627" y="153" width="73" height="21" fill="#2a90f8"/>
<rect x="628" y="154" width="71" height="19" fill="url(#btn)"/>
<rect x="628" y="154" width="71" height="1" fill="#f6f0ea"/>
<rect x="628" y="172" width="71" height="1" fill="#f6f0ea"/>
<rect x="628" y="154" width="1" height="19" fill="#f6f0ea"/>
<rect x="698" y="154" width="1" height="19" fill="#f6f0ea"/>
<text x="662.5" y="167.7" font-size="12" text-anchor="middle" font-weight="normal" fill="#000" textLength="21" lengthAdjust="spacingAndGlyphs">Start</text>
<text x="626.8" y="192.5" font-size="12" text-anchor="start" font-weight="normal" fill="#000" textLength="23.3" lengthAdjust="spacingAndGlyphs">Drive</text>
<rect x="626" y="200" width="75" height="21" fill="#acacac"/>
<rect x="627" y="201" width="73" height="19" fill="url(#btn)"/>
<text x="630.5" y="215" font-size="12" text-anchor="start" font-weight="normal" fill="#000" textLength="8" lengthAdjust="spacingAndGlyphs">T:</text>
<path d="M688.9 208 L692.5 211.6 L696.1 208 L696.1 211.2 L692.5 214.8 L688.9 211.2 Z" fill="#484848" shape-rendering="geometricPrecision"/>
<text x="626.7" y="237.9" font-size="12" text-anchor="start" font-weight="normal" fill="#000" textLength="46.4" lengthAdjust="spacingAndGlyphs">File length</text>
<rect x="626" y="252" width="56" height="20" fill="#acacac"/>
<rect x="627" y="253" width="54" height="18" fill="#ffffff"/>
<text x="629.3" y="266" font-size="12" text-anchor="start" font-weight="normal" fill="#000" textLength="17.6" lengthAdjust="spacingAndGlyphs">500</text>
<rect x="665" y="254" width="15" height="8" fill="#c8c8c8"/>
<rect x="666" y="255" width="13" height="6" fill="#eaeaea"/>
<rect x="665" y="262" width="15" height="8" fill="#c8c8c8"/>
<rect x="666" y="263" width="13" height="6" fill="#eaeaea"/>
<path d="M669.5 259 h6 l-3 -3 z M669.5 264 h6 l-3 3 z" fill="#000" shape-rendering="geometricPrecision"/>
<text x="683.5" y="269" font-size="12" text-anchor="start" font-weight="normal" fill="#000" textLength="15" lengthAdjust="spacingAndGlyphs">MB</text>
<text x="626.7" y="299.8" font-size="12" text-anchor="start" font-weight="normal" fill="#000" textLength="56.9" lengthAdjust="spacingAndGlyphs">Data pattern</text>
<rect x="626" y="308" width="75" height="21" fill="#acacac"/>
<rect x="627" y="309" width="73" height="19" fill="url(#btn)"/>
<text x="629.8" y="323" font-size="12" text-anchor="start" font-weight="normal" fill="#000" textLength="20" lengthAdjust="spacingAndGlyphs">Zero</text>
<path d="M688.9 316 L692.5 319.6 L696.1 316 L696.1 319.2 L692.5 322.8 L688.9 319.2 Z" fill="#484848" shape-rendering="geometricPrecision"/>
<text x="628.5" y="659.8" font-size="12" text-anchor="start" font-weight="normal" fill="#000" textLength="46.4" lengthAdjust="spacingAndGlyphs">File length</text>
<rect x="626" y="671" width="75" height="21" fill="#acacac"/>
<rect x="627" y="672" width="73" height="19" fill="url(#btn)"/>
<text x="630" y="686" font-size="12" text-anchor="start" font-weight="normal" fill="#000" textLength="30.3" lengthAdjust="spacingAndGlyphs">64 MB</text>
<path d="M688.9 679 L692.5 682.6 L696.1 679 L696.1 682.2 L692.5 685.8 L688.9 682.2 Z" fill="#484848" shape-rendering="geometricPrecision"/>
<text x="628.6" y="714" font-size="12" text-anchor="start" font-weight="normal" fill="#000" textLength="25.8" lengthAdjust="spacingAndGlyphs">Delay</text>
<rect x="628" y="723" width="54" height="20" fill="#acacac"/>
<rect x="629" y="724" width="52" height="18" fill="#ffffff"/>
<text x="631.2" y="737" font-size="12" text-anchor="start" font-weight="normal" fill="#000" textLength="5.8" lengthAdjust="spacingAndGlyphs">0</text>
<rect x="686" y="722" width="15" height="10" fill="#c8c8c8"/>
<rect x="687" y="723" width="13" height="8" fill="#eaeaea"/>
<rect x="686" y="733" width="15" height="10" fill="#c8c8c8"/>
<rect x="687" y="734" width="13" height="8" fill="#eaeaea"/>
<path d="M690.5 728.2 h6 l-3 -3 z M690.5 736 h6 l-3 3 z" fill="#000" shape-rendering="geometricPrecision"/>
</svg></body></html>
